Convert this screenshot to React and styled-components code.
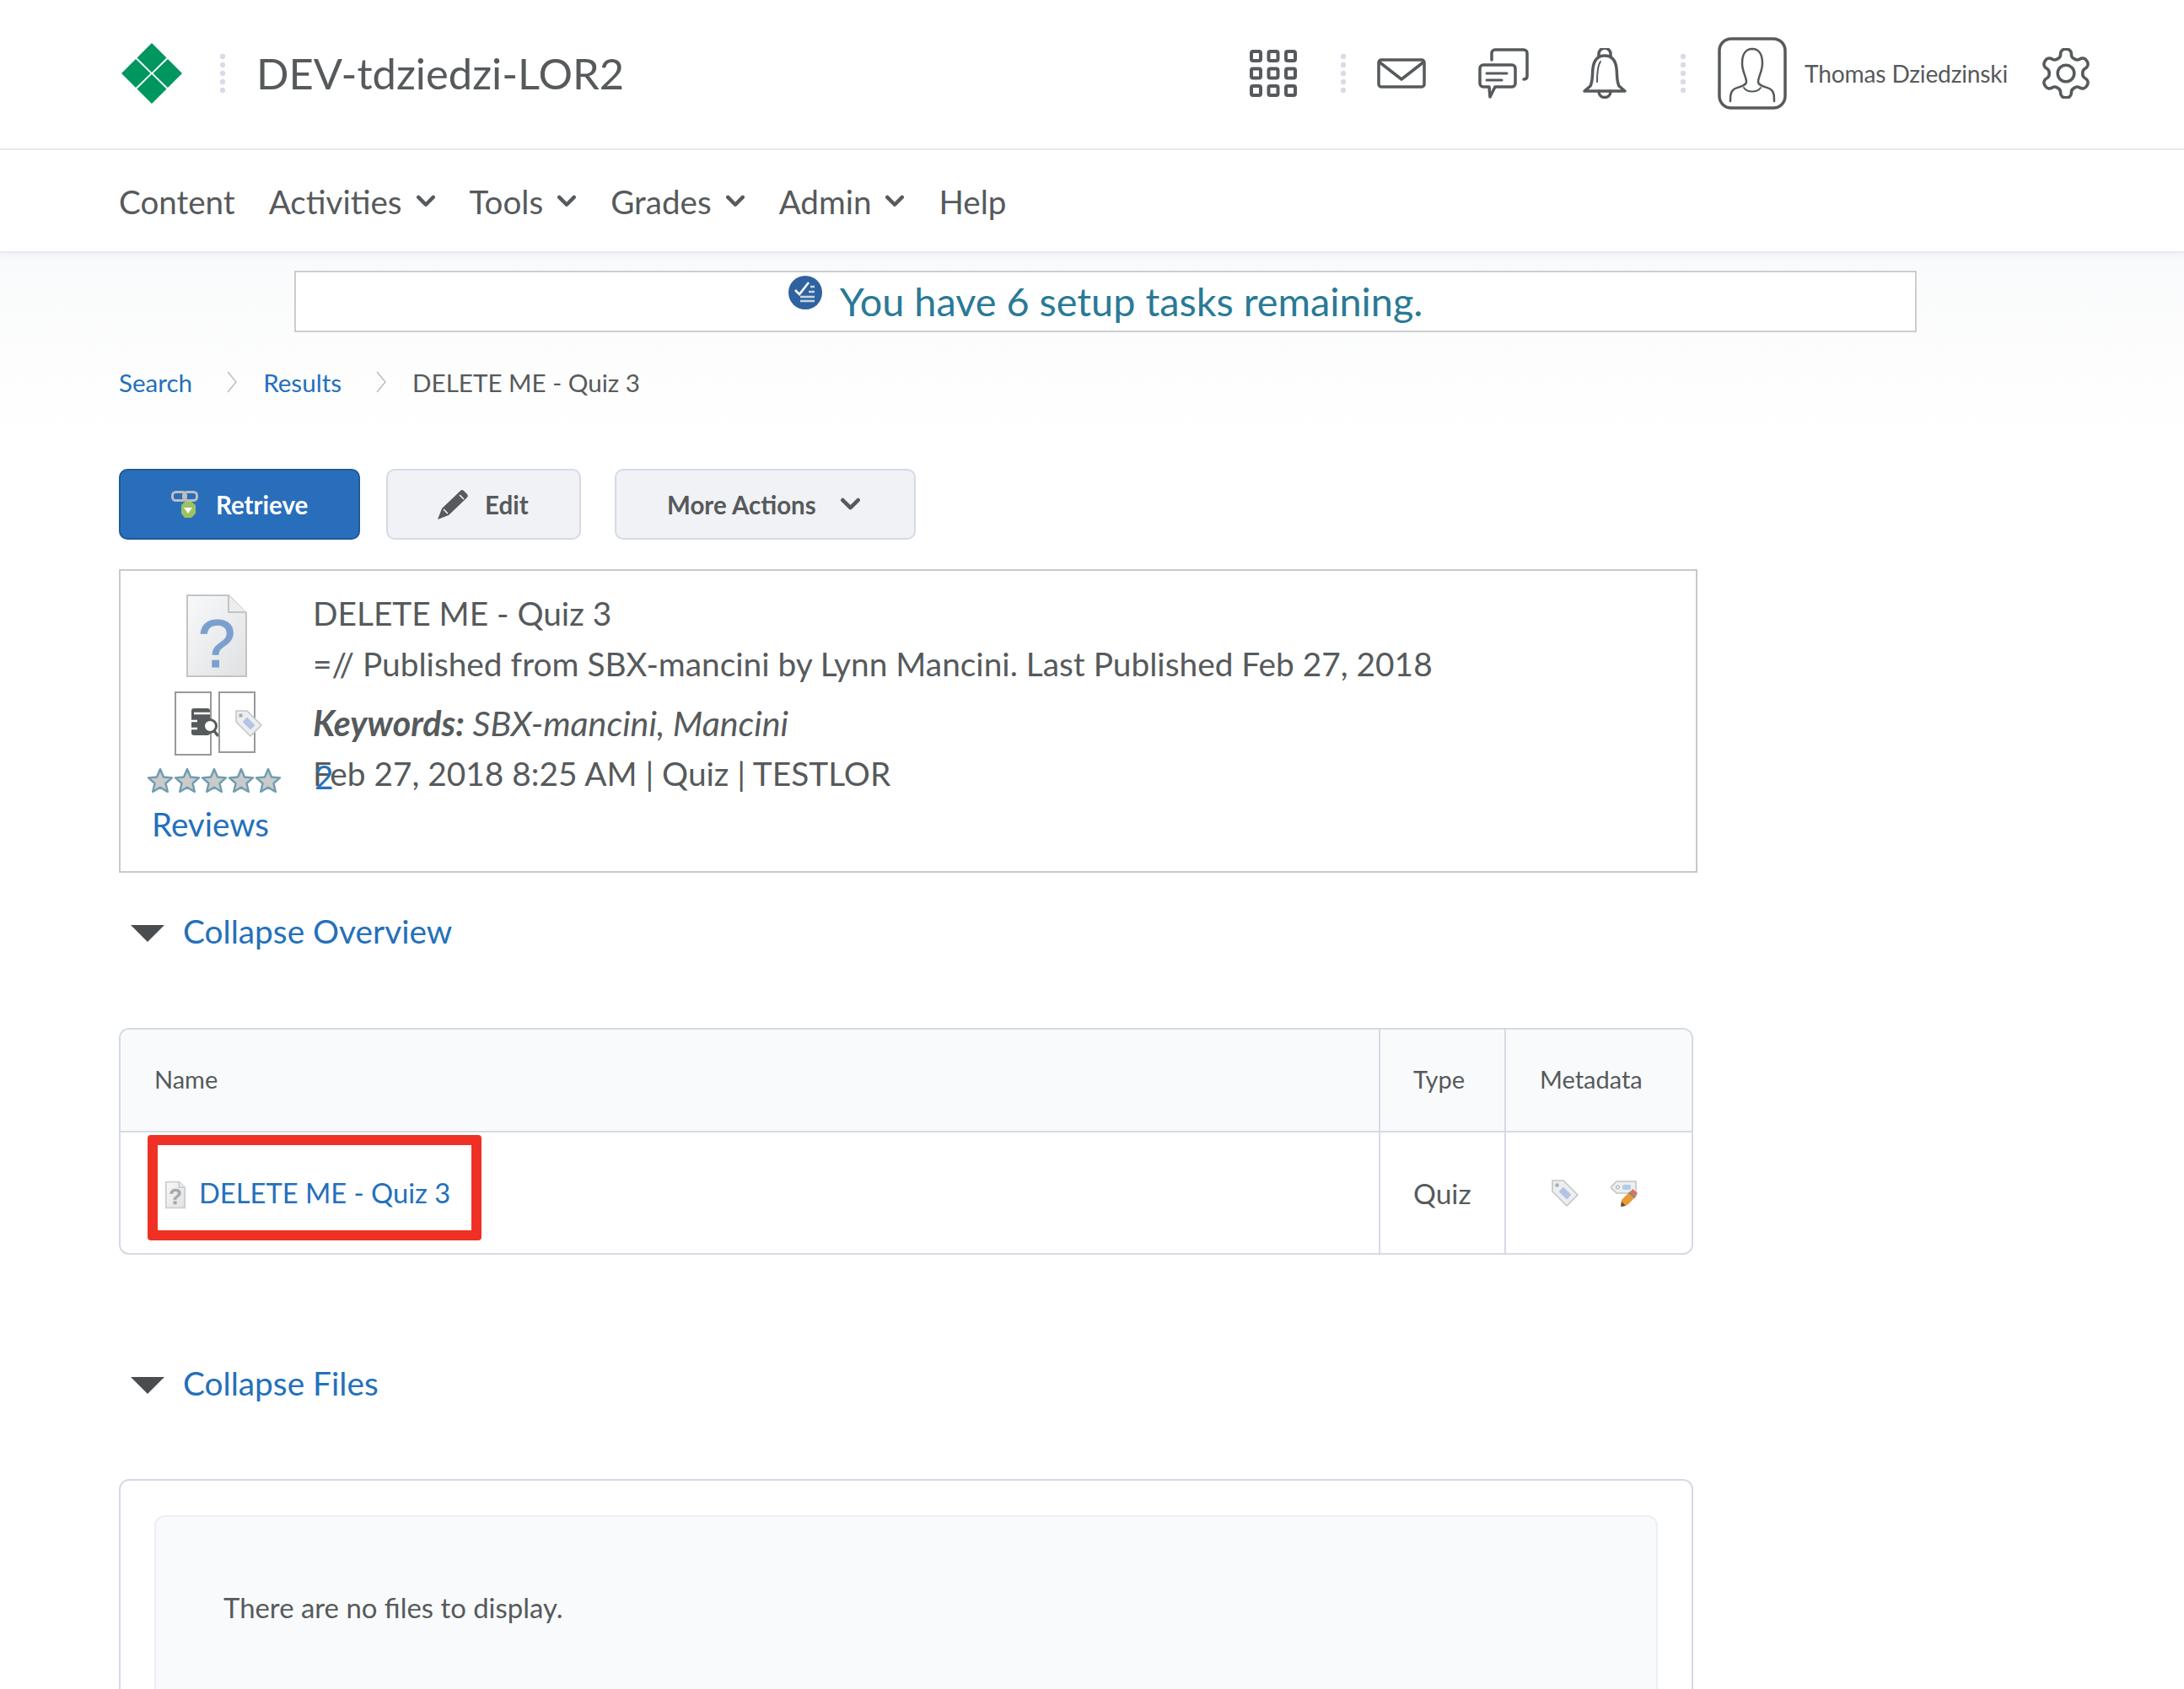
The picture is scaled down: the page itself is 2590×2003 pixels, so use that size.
import React from "react";
import styled, { createGlobalStyle } from "styled-components";

const Global = createGlobalStyle`
  html, body { margin: 0; padding: 0; background: #fff; }
  body { font-family: Lato, "Open Sans", sans-serif; color: #565a5c; }
  #root { height: 2003px; overflow: hidden; }
  * { box-sizing: border-box; }
`;

const INK = "#565a5c";
const BLUE = "#2470bb";

const Header = styled.header`
  height: 178px;
  display: flex;
  align-items: center;
  padding: 0 110px 3px 144px;
  border-bottom: 2px solid #e6eaf0;
`;
const Brand = styled.div`
  display: flex;
  align-items: center;
  flex: 1;
`;
const Title = styled.div`
  font-size: 50.7px;
  margin-left: 37px;
  line-height: 60px;
`;
const Dots = styled.span`
  display: block;
  width: 6px;
  height: 46px;
  margin: ${(p) => p.$m || "0"};
  background-image: radial-gradient(circle at 3px 3px, #d8dce6 3px, transparent 3.2px);
  background-size: 6px 10px;
`;
const Tools = styled.div`
  display: flex;
  align-items: center;
`;
const IconSlot = styled.div`
  display: flex;
  margin-left: ${(p) => p.$ml || 0}px;
`;
const UserName = styled.span`
  font-size: 28.2px;
  margin-left: 21px;
  letter-spacing: -0.2px;
`;
const Nav = styled.nav`
  height: 122px;
  display: flex;
  align-items: center;
  gap: 40px;
  padding: 1px 0 0 141px;
  border-bottom: 2px solid #e6eaf0;
  box-shadow: 0 4px 6px rgba(230, 234, 240, 0.45);
  position: relative;
  background: #fff;
`;
const NavItem = styled.div`
  display: flex;
  align-items: center;
  gap: 16px;
  font-size: 38.6px;
`;
const Main = styled.main`
  padding: 21px 0 0 141px;
  background: linear-gradient(#f9fafb, #ffffff 220px);
`;
const Banner = styled.div`
  width: 1924px;
  height: 73px;
  margin-left: 208px;
  background: #fff;
  border: 2px solid #cdcdcd;
  display: flex;
  justify-content: center;
  font-size: 46.8px;
  line-height: 68px;
  color: #2a7a96;
  gap: 21px;
`;
const BannerIcon = styled.svg`
  margin-top: 4px;
`;
const Crumbs = styled.div`
  display: flex;
  align-items: center;
  height: 36px;
  margin-top: 41px;
  font-size: 29.6px;
`;
const Crumb = styled.a`
  color: ${BLUE};
`;
const CrumbSep = styled.svg`
  margin: 0 31px 0 41px;
`;
const ButtonRow = styled.div`
  display: flex;
  gap: 31px;
  margin-top: 85px;
`;
const Button = styled.div`
  display: flex;
  align-items: center;
  height: 84px;
  width: ${(p) => p.$w}px;
  margin-left: ${(p) => p.$ml || 0}px;
  padding-left: ${(p) => p.$pl}px;
  gap: ${(p) => p.$gap}px;
  font-size: 29.5px;
  font-weight: 700;
  border-radius: 10px;
  border: 2px solid ${(p) => (p.$primary ? "#1e5a96" : "#d5dae5")};
  background: ${(p) => (p.$primary ? "#286ebb" : "#f1f2f5")};
  color: ${(p) => (p.$primary ? "#fff" : INK)};
`;
const Card = styled.section`
  width: 1872px;
  height: 360px;
  margin-top: 35px;
  border: 2px solid #c9c9c9;
  background: #fff;
  display: flex;
`;
const CardAside = styled.div`
  width: 228px;
  display: flex;
  flex-direction: column;
  padding: 27px 0 0 31px;
`;
const DocWrap = styled.div`
  display: flex;
  margin-left: 46px;
`;
const DocSvg = styled.svg`
  overflow: visible;
`;
const IconBoxes = styled.div`
  display: flex;
  gap: 8px;
  margin: 16px 0 0 33px;
`;
const IconBox = styled.div`
  width: 44px;
  height: ${(p) => p.$h}px;
  border: 2px solid #999;
  position: relative;
`;
const BoxGlyph = styled.svg`
  position: absolute;
  left: ${(p) => p.$l}px;
  top: ${(p) => p.$t}px;
  overflow: visible;
`;
const Stars = styled.div`
  display: flex;
  margin-top: ${(p) => p.$mt}px;
`;
const Reviews = styled.a`
  color: ${BLUE};
  font-size: 38.6px;
  line-height: 48px;
  margin: 13px 0 0 6px;
`;
const CardBody = styled.div`
  font-size: 38.85px;
  position: relative;
  padding-top: 26px;
`;
const CardLine = styled.div`
  line-height: 48px;
  height: ${(p) => p.$h || 60}px;
  white-space: nowrap;
`;
const Keywords = styled(CardLine)`
  font-style: italic;
  font-size: 41.2px;
`;
const Overlap = styled.span`
  position: absolute;
  left: 2px;
  top: 220px;
  color: ${BLUE};
  line-height: 48px;
`;
const Collapse = styled.div`
  display: flex;
  align-items: center;
  height: 48px;
  margin-top: ${(p) => p.$mt}px;
  padding-left: 14px;
  gap: 22px;
  font-size: 38.8px;
  color: ${BLUE};
`;
const ArrowSvg = styled.svg`
  margin-top: 5px;
`;
const Table = styled.div`
  width: 1867px;
  height: 269px;
  margin-top: 91px;
  border: 2px solid #d5dae5;
  border-radius: 12px;
  display: grid;
  grid-template-columns: 1fr 149px 222px;
  grid-template-rows: 122px 1fr;
  overflow: hidden;
`;
const HeadCell = styled.div`
  background: #f9fafb;
  border-bottom: 2px solid #d5dae5;
  border-left: ${(p) => (p.$first ? "0" : "2px solid #d5dae5")};
  font-size: 29px;
  display: flex;
  align-items: center;
  padding: 0 0 3px ${(p) => p.$pl}px;
`;
const BodyCell = styled.div`
  border-left: ${(p) => (p.$first ? "0" : "2px solid #d5dae5")};
  font-size: 33.6px;
  display: flex;
  align-items: center;
  padding-left: ${(p) => p.$pl}px;
  gap: ${(p) => p.$gap || 0}px;
`;
const NameCell = styled.div`
  padding: 3px 0 0 32px;
`;
const Highlight = styled.div`
  width: 396px;
  height: 125px;
  border: 12px solid #ee3124;
  border-radius: 4px;
  display: flex;
  align-items: flex-end;
  padding: 0 0 26px 9px;
  gap: 16px;
  font-size: 32.7px;
  color: ${BLUE};
`;
const HighlightLink = styled.a`
  line-height: 40px;
  position: relative;
  top: 2px;
  white-space: nowrap;
`;
const Panel = styled.div`
  width: 1867px;
  height: 400px;
  margin-top: 90px;
  border: 2px solid #d5dae5;
  border-radius: 12px;
  padding: 41px 40px 0 40px;
  background: #fff;
`;
const PanelInner = styled.div`
  height: 400px;
  background: #f9fafb;
  border: 2px solid #eceff4;
  border-radius: 12px;
  padding: 84px 0 0 80px;
  font-size: 32.9px;
  line-height: 48px;
`;

const Logo = () => (
  <svg width="72" height="72" viewBox="0 0 72 72">
    <g fill="#00965f">
      <path d="M36 0 53.5 17.5 36 35 18.5 17.5Z" />
      <path d="M17 19 34.5 36 17 53 0 36Z" />
      <path d="M55 19 72 36 55 53 37.5 36Z" />
      <path d="M36 37 53.5 54.5 36 72 18.5 54.5Z" />
    </g>
  </svg>
);
const Waffle = () => (
  <svg width="56" height="56" viewBox="0 0 56 56" fill="none" stroke={INK} strokeWidth="4">
    {[0, 20.5, 41].map((y) =>
      [0, 20.5, 41].map((x) => <rect key={`${x}-${y}`} x={x + 2} y={y + 2} width="11" height="11" rx="2" />)
    )}
  </svg>
);
const Mail = () => (
  <svg width="58" height="36" viewBox="0 0 58 36" fill="none" stroke={INK} strokeWidth="3.5">
    <rect x="2" y="2" width="54" height="32" rx="3" />
    <path d="M2 4 29 25 56 4" strokeLinejoin="round" />
  </svg>
);
const Chat = () => (
  <svg width="60" height="60" viewBox="0 0 60 60" fill="none" stroke={INK} strokeWidth="3.5" strokeLinecap="round" strokeLinejoin="round">
    <path d="M16 14V6a4 4 0 0 1 4-4h34a4 4 0 0 1 4 4v28a4 4 0 0 1-4 3" />
    <path d="M6 20h34a4 4 0 0 1 4 4v18a4 4 0 0 1-4 4H20l-6 12-1-12H6a4 4 0 0 1-4-4V24a4 4 0 0 1 4-4Z" />
    <path d="M10 30h24M10 38h18" strokeWidth="3" />
  </svg>
);
const Bell = () => (
  <svg width="54" height="60" viewBox="0 0 54 60" fill="none" stroke={INK} strokeWidth="3.5" strokeLinecap="round" strokeLinejoin="round">
    <path d="M20 10V7a7 7 0 0 1 14 0v3" />
    <path d="M27 9c-9 0-13 7-14 15-1 9 0 15-3 21l-7 6h48l-7-6c-3-6-2-12-3-21-1-8-5-15-14-15Z" />
    <path d="M20 51c0 10 14 10 14 0" />
    <path d="M22 16c-3 4-4 10-4 24" strokeWidth="2" />
  </svg>
);
const Avatar = () => (
  <svg width="82" height="86" viewBox="0 0 82 86" fill="none" stroke={INK} strokeWidth="3.5" strokeLinecap="round">
    <rect x="2" y="2" width="78" height="82" rx="14" />
    <path d="M41 14c-8 0-12 7-12 17 0 10 5 16 5 22 0 5-10 6-15 9-4 3-4 8-4 14" strokeWidth="2.5" />
    <path d="M41 14c8 0 12 7 12 17 0 10-5 16-5 22 0 5 10 6 15 9 4 3 4 8 4 14" strokeWidth="2.5" />
    <path d="M31 60c4 6 16 6 20 0" strokeWidth="2" />
  </svg>
);
const Gear = () => (
  <svg width="60" height="60" viewBox="1.6 1.6 20.8 20.8" fill="none" stroke={INK} strokeWidth="1.25" strokeLinejoin="round">
    <path d="M12.22 2h-.44a2 2 0 0 0-2 2v.18a2 2 0 0 1-1 1.73l-.43.25a2 2 0 0 1-2 0l-.15-.08a2 2 0 0 0-2.73.73l-.22.38a2 2 0 0 0 .73 2.73l.15.1a2 2 0 0 1 1 1.72v.51a2 2 0 0 1-1 1.74l-.15.09a2 2 0 0 0-.73 2.73l.22.38a2 2 0 0 0 2.73.73l.15-.08a2 2 0 0 1 2 0l.43.25a2 2 0 0 1 1 1.73V20a2 2 0 0 0 2 2h.44a2 2 0 0 0 2-2v-.18a2 2 0 0 1 1-1.73l.43-.25a2 2 0 0 1 2 0l.15.08a2 2 0 0 0 2.73-.73l.22-.39a2 2 0 0 0-.73-2.73l-.15-.08a2 2 0 0 1-1-1.74v-.5a2 2 0 0 1 1-1.74l.15-.09a2 2 0 0 0 .73-2.73l-.22-.38a2 2 0 0 0-2.73-.73l-.15.08a2 2 0 0 1-2 0l-.43-.25a2 2 0 0 1-1-1.73V4a2 2 0 0 0-2-2z" />
    <circle cx="12" cy="12" r="3.4" />
  </svg>
);
const Chevron = ({ w = 24, color = INK }) => (
  <svg width={w} height={w * 0.65} viewBox="0 0 24 16" fill="none" stroke={color} strokeWidth="4.5" strokeLinecap="round" strokeLinejoin="round">
    <path d="M3 3 12 12 21 3" />
  </svg>
);
const TaskBadge = () => (
  <BannerIcon width="40" height="40" viewBox="0 0 40 40">
    <circle cx="20" cy="20" r="20" fill="#2f639f" />
    <path d="M8 17 13 22 24 8" fill="none" stroke="#fff" strokeWidth="2.6" />
    <path d="M26 13h5M24 19h7M14 25h17M14 30h17" stroke="#c6d5e8" strokeWidth="2.6" />
  </BannerIcon>
);
const Sep = () => (
  <CrumbSep width="12" height="26" viewBox="0 0 12 26" fill="none" stroke="#b9bec8" strokeWidth="1.6">
    <path d="M1 1 11 13 1 25" />
  </CrumbSep>
);
const RetrieveIcon = () => (
  <svg width="32" height="32" viewBox="0 0 32 32">
    <g fill="none" stroke="#bdbdbd" strokeWidth="3">
      <rect x="1.5" y="1.5" width="16" height="10" rx="4" />
      <rect x="14.5" y="1.5" width="16" height="10" rx="4" />
    </g>
    <path d="M16 13h8l5 4v10l-5 5h-8l-4-5V17Z" fill="#9cc25f" />
    <path d="M15 20h10l-5 7Z" fill="#fff" />
  </svg>
);
const Pencil = () => (
  <svg width="38" height="36" viewBox="0 0 38 36" fill={INK}>
    <path d="M0 36 5 23 27 2a3 3 0 0 1 4 0l4 4a3 3 0 0 1 0 4L13 31Z" />
    <path d="M7 24 12 29" stroke="#f1f2f5" strokeWidth="1.6" />
    <path d="M26 7 31 12" stroke="#f1f2f5" strokeWidth="1.6" />
  </svg>
);
const QuestionDoc = ({ w, h, qColor, qSize, qWeight, qY, stroke, strokeW }) => (
  <DocSvg width={w} height={h} viewBox="0 0 74 100">
    <defs>
      <linearGradient id={`dg${w}`} x1="0" y1="0" x2="1" y2="1">
        <stop offset="0" stopColor="#f8f9fa" />
        <stop offset="1" stopColor="#dfe1e3" />
      </linearGradient>
    </defs>
    <path d="M2 2H51L72 23V98H2Z" fill={`url(#dg${w})`} stroke={stroke} strokeWidth={strokeW} />
    <path d="M51 2V22H72" fill="#eceded" stroke={stroke} strokeWidth={strokeW} />
    <text x="37" y={qY} fontFamily="'Liberation Sans', sans-serif" fontSize={qSize} fontWeight={qWeight} stroke={qColor} strokeWidth="1" textAnchor="middle" fill={qColor}>?</text>
  </DocSvg>
);
const TagShape = () => (
  <>
    <path d="M1 1H14L31 18 18 31 1 14Z" fill="#eceeef" stroke="#c3c5c6" strokeWidth="1.6" strokeLinejoin="round" />
    <rect x="4.5" y="4.5" width="4" height="4" fill="#a9abae" />
    <path d="M10 14 14 10 22 18 18 22Z" fill="#b3c4e5" stroke="#b3c4e5" strokeWidth="2" strokeLinejoin="round" />
  </>
);
const TagIcon = () => (
  <svg width="32" height="32" viewBox="0 0 32 32"><TagShape /></svg>
);
const TagEditIcon = () => (
  <svg width="32" height="32" viewBox="0 0 32 32">
    <path d="M0 9 7 2H30V16H7Z" fill="#eceeef" stroke="#c3c5c6" strokeWidth="1.6" strokeLinejoin="round" />
    <circle cx="8.5" cy="9" r="2" fill="none" stroke="#a9abae" />
    <rect x="14" y="6" width="10" height="6" rx="2" fill="#b3cde8" />
    <path d="M12 32 13 24 24 13 31 19 20 30Z" fill="#e99a3a" />
    <path d="M23 14 30 20 28 22 21 16Z" fill="#8a8a8a" />
    <path d="M26 11 32 16 30 19 24 14Z" fill="#e0686c" />
    <path d="M12 32 13 26 18 31Z" fill="#6b4a2c" />
  </svg>
);
const ReportGlyph = () => (
  <BoxGlyph $l="18" $t="18" width="34" height="36" viewBox="0 0 34 36">
    <rect x="0" y="0" width="22" height="32" rx="3" fill={INK} />
    <path d="M3 6h19M0 15h7M0 24h7" stroke="#fff" strokeWidth="2.4" />
    <circle cx="22" cy="21" r="7.5" fill="#fff" stroke={INK} strokeWidth="3" />
    <path d="M27 27 32 33" stroke={INK} strokeWidth="3.4" />
  </BoxGlyph>
);
const Star = () => (
  <svg width="32" height="30" viewBox="0 0 32 30">
    <path d="M16 2 20 11.5 30 12.4 22.5 19 24.8 29 16 23.7 7.2 29 9.5 19 2 12.4 12 11.5Z" fill="#c9cacb" stroke="#6f9cb0" strokeWidth="2.4" strokeLinejoin="round" />
  </svg>
);
const CollapseArrow = () => (
  <ArrowSvg width="40" height="20" viewBox="0 0 40 20">
    <path d="M0 0H40L20 20Z" fill="#4a4d4f" />
  </ArrowSvg>
);

const navItems = [
  { t: "Content" },
  { t: "Activities", c: 1 },
  { t: "Tools", c: 1 },
  { t: "Grades", c: 1 },
  { t: "Admin", c: 1 },
  { t: "Help" },
];

export default function App() {
  return (
    <>
      <Global />
      <Header>
        <Brand>
          <Logo />
          <Dots $m="0 0 0 45px" />
          <Title>DEV-tdziedzi-LOR2</Title>
        </Brand>
        <Tools>
          <IconSlot><Waffle /></IconSlot>
          <Dots $m="0 0 0 52px" />
          <IconSlot $ml="37"><Mail /></IconSlot>
          <IconSlot $ml="62"><Chat /></IconSlot>
          <IconSlot $ml="63"><Bell /></IconSlot>
          <Dots $m="0 0 0 63px" />
          <IconSlot $ml="38"><Avatar /></IconSlot>
          <UserName>Thomas Dziedzinski</UserName>
          <IconSlot $ml="39"><Gear /></IconSlot>
        </Tools>
      </Header>
      <Nav>
        {navItems.map((n) => (
          <NavItem key={n.t}>
            {n.t}
            {n.c ? <Chevron /> : null}
          </NavItem>
        ))}
      </Nav>
      <Main>
        <Banner>
          <TaskBadge />
          You have 6 setup tasks remaining.
        </Banner>
        <Crumbs>
          <Crumb>Search</Crumb>
          <Sep />
          <Crumb>Results</Crumb>
          <Sep />
          DELETE ME - Quiz 3
        </Crumbs>
        <ButtonRow>
          <Button $primary $w={286} $pl={60} $gap={21}><RetrieveIcon />Retrieve</Button>
          <Button $w={231} $pl={59} $gap={18}><Pencil />Edit</Button>
          <Button $ml={9} $w={357} $pl={60} $gap={28}>More Actions<Chevron w={25} /></Button>
        </ButtonRow>
        <Card>
          <CardAside>
            <DocWrap>
              <QuestionDoc w={74} h={100} qColor="#7ba0cf" qSize={80} qWeight={400} qY={87} stroke="#c4c4c4" strokeW={2} />
            </DocWrap>
            <IconBoxes>
              <IconBox $h={76}><ReportGlyph /></IconBox>
              <IconBox $h={73}>
                <BoxGlyph $l="18" $t="20" width="32" height="32" viewBox="0 0 32 32"><TagShape /></BoxGlyph>
              </IconBox>
            </IconBoxes>
            <Stars $mt={14}>
              {[0, 1, 2, 3, 4].map((i) => <Star key={i} />)}
            </Stars>
            <Reviews>Reviews</Reviews>
          </CardAside>
          <CardBody>
            <CardLine>DELETE ME - Quiz 3</CardLine>
            <CardLine $h={70}>=// Published from SBX-mancini by Lynn Mancini. Last Published Feb 27, 2018</CardLine>
            <Keywords><b>Keywords:</b> SBX-mancini, Mancini</Keywords>
            <CardLine>Feb 27, 2018 8:25 AM | Quiz | TESTLOR</CardLine>
            <Overlap>2</Overlap>
          </CardBody>
        </Card>
        <Collapse $mt={45}><CollapseArrow />Collapse Overview</Collapse>
        <Table>
          <HeadCell $first $pl={40}>Name</HeadCell>
          <HeadCell $pl={39}>Type</HeadCell>
          <HeadCell $pl={40}>Metadata</HeadCell>
          <NameCell>
            <Highlight>
              <QuestionDoc w={24} h={32} qColor="#a8a8a8" qSize={80} qWeight={700} qY={84} stroke="#cfcfcf" strokeW={6} />
              <HighlightLink>DELETE ME - Quiz 3</HighlightLink>
            </Highlight>
          </NameCell>
          <BodyCell $pl={39}>Quiz</BodyCell>
          <BodyCell $pl={54} $gap={38}><TagIcon /><TagEditIcon /></BodyCell>
        </Table>
        <Collapse $mt={128}><CollapseArrow />Collapse Files</Collapse>
        <Panel>
          <PanelInner>There are no files to display.</PanelInner>
        </Panel>
      </Main>
    </>
  );
}
